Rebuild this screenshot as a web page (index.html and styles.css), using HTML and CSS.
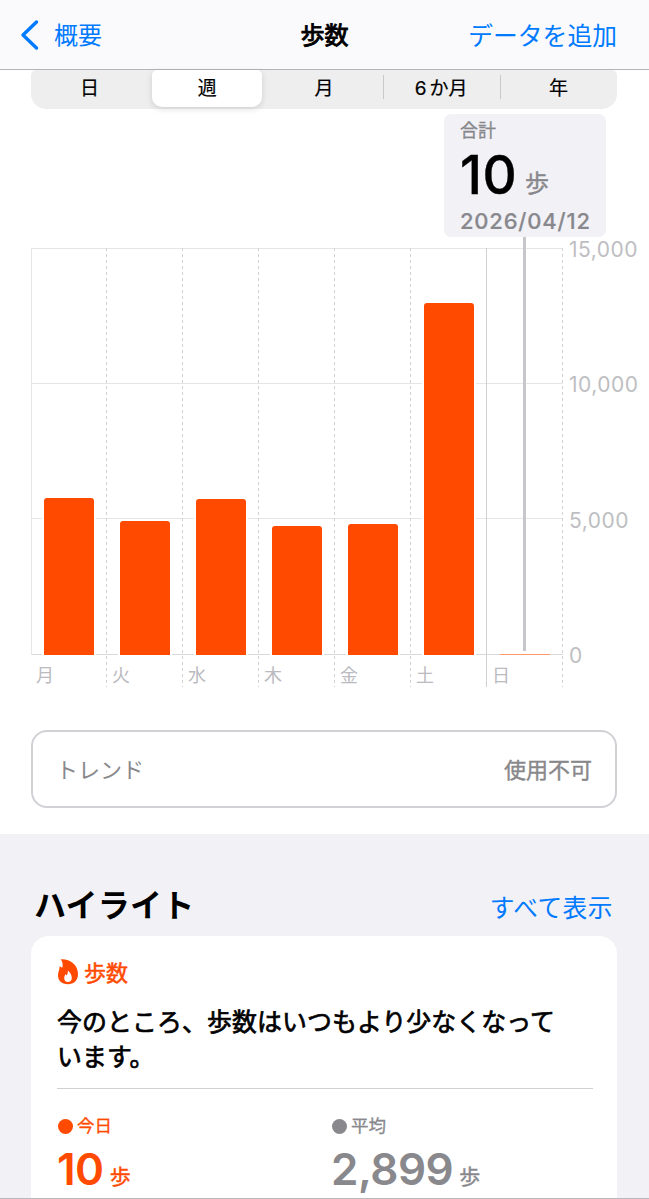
FILE: index.html
```html
<!DOCTYPE html>
<html lang="ja">
<head>
    <meta charset="UTF-8">
    <meta name="viewport" content="width=device-width, initial-scale=1.0">
    <title>歩数</title>
    <link rel="stylesheet" href="styles.css">
</head>
<body>
    <header class="navbar">
        <a class="back">
            <svg width="19" height="32" viewBox="0 0 19 32"><path d="M16.500 3 3 16l13.500 13" fill="none" stroke="#007aff" stroke-width="3.4" stroke-linecap="round" stroke-linejoin="round"/></svg>
            <span>概要</span>
        </a>
        <h1>歩数</h1>
        <a class="add">データを追加</a>
    </header>

    <main>
        <div class="segments">
            <div class="segment">日</div>
            <div class="segment active">週</div>
            <div class="segment">月</div>
            <div class="segment divided"><span>6</span>か月</div>
            <div class="segment divided">年</div>
        </div>

        <div class="callout">
            <div class="callout-label">合計</div>
            <div class="callout-value">10<span>歩</span></div>
            <div class="callout-date">2026/04/12</div>
        </div>

        <!-- グラフ -->
        <div class="chart">
            <div class="days">
                <div class="day"><div class="plot"><div class="bar" style="height: 157px"></div></div><span>月</span></div>
                <div class="day"><div class="plot"><div class="bar" style="height: 134px"></div></div><span>火</span></div>
                <div class="day"><div class="plot"><div class="bar" style="height: 156px"></div></div><span>水</span></div>
                <div class="day"><div class="plot"><div class="bar" style="height: 129px"></div></div><span>木</span></div>
                <div class="day"><div class="plot"><div class="bar" style="height: 131px"></div></div><span>金</span></div>
                <div class="day"><div class="plot"><div class="bar" style="height: 352px"></div></div><span>土</span></div>
                <div class="day"><div class="plot"><div class="bar tiny" style="height: 1px"></div></div><span>日</span><i class="cursor"></i></div>
            </div>
            <div class="axis">
                <span>15,000</span>
                <span>10,000</span>
                <span>5,000</span>
                <span>0</span>
            </div>
        </div>

        <div class="trend">
            <span>トレンド</span>
            <b>使用不可</b>
        </div>
    </main>

    <section class="highlights">
        <div class="section-head">
            <h2>ハイライト</h2>
            <a>すべて表示</a>
        </div>

        <div class="card">
            <div class="card-title">
                <svg width="22" height="26" viewBox="0 0 22 26">
                    <path fill="#ff4a00" fill-rule="evenodd" d="M3.800.4C12.500-.2 21 5.500 21 15c0 6.300-4 10.300-10.200 10.300C4.700 25.300 1 21.700 1 16.300c0-3.500 1.800-5.500 1.600-9.100l2.700 1.500C5.900 6 5.900 3 3.800.4ZM10.800 11.500c.3 2-.3 3.300-.9 4.900l-1.500-1.200c-.8 1.300-1.200 2.600-1.200 3.900 0 2.500 1.500 3.900 3.700 3.900s3.900-1.500 3.900-4c0-3.100-1.800-5.500-4-7.500Z"/>
                </svg>
                <span>歩数</span>
            </div>
            <p class="message">今のところ、歩数はいつもより少なくなって<br>います。</p>
            <div class="stats">
                <div class="stat today">
                    <div class="stat-label"><i></i>今日</div>
                    <div class="stat-value">10<span>歩</span></div>
                </div>
                <div class="stat average">
                    <div class="stat-label"><i></i>平均</div>
                    <div class="stat-value">2,899<span>歩</span></div>
                </div>
            </div>
        </div>
    </section>
</body>
</html>
```
FILE: styles.css
```css
* {
    box-sizing: border-box;
}

body {
    margin: 0;
    height: 1199px;
    overflow: hidden;
    display: flex;
    flex-direction: column;
    font-family: Inter, "Noto Sans CJK JP", sans-serif;
    background: #fff;
    color: #000;
    border-bottom: 1px solid #b9b9bc;
}

h1, h2, p {
    margin: 0;
}

/* ナビゲーションバー */
.navbar {
    flex: none;
    height: 70px;
    padding: 1px 32px 0 20px;
    display: grid;
    grid-template-columns: 1fr auto 1fr;
    align-items: center;
    background: #fafafc;
    border-bottom: 1px solid #b4b4b6;
    font-size: 24px;
    line-height: 68px;
}

.navbar h1 {
    padding: 2px 0 0 12px;
    font-size: 24px;
    font-weight: 400;
    line-height: 66px;
    -webkit-text-stroke: .9px #000;
}

.back, .add {
    color: #007aff;
}

.back {
    display: flex;
    align-items: center;
    gap: 15px;
}

.back span, .add {
    padding-top: 2px;
    line-height: 66px;
}

.add {
    text-align: right;
    font-size: 24.8px;
}

main {
    flex: none;
    height: 764px;
    padding: 0 32px 0 31px;
}

.segments {
    height: 39px;
    padding-bottom: 2px;
    display: grid;
    grid-template-columns: repeat(5, 1fr);
    background: #eeeeef;
    border-radius: 5px 5px 15px 15px;
    font-size: 19px;
    line-height: 37px;
    text-align: center;
    -webkit-text-stroke: .2px #000;
}

.segment.active {
    margin: 0 3px 0 4px;
    background: #fff;
    border-radius: 5px 5px 10px 10px;
    box-shadow: 0 2px 6px rgba(0, 0, 0, .13);
}

.segment.divided {
    background: linear-gradient(#c9c9cc, #c9c9cc) 0 5px / 1px 24px no-repeat;
}

.segment span {
    margin-right: 3px;
}

.callout {
    width: 162px;
    height: 123px;
    margin: 5px 11px 0 auto;
    padding: 5px 0 0 16px;
    background: #f1f1f6;
    border-radius: 7px;
    color: #88888c;
}

.callout-label {
    font-size: 18px;
    line-height: 23px;
    height: 22px;
    -webkit-text-stroke: .3px #88888c;
}

.callout-value {
    height: 67px;
    display: flex;
    align-items: baseline;
    font-size: 53px;
    line-height: 68px;
    font-weight: 500;
    letter-spacing: .4px;
    color: #000;
    white-space: nowrap;
    -webkit-text-stroke: .4px #000;
}

.callout-value span {
    margin: 0 0 2px 8px;
    transform: translateY(-2px);
    font-size: 24px;
    font-weight: 400;
    color: #88888c;
    -webkit-text-stroke: .4px #88888c;
}

.callout-date {
    font-size: 22px;
    line-height: 26px;
    font-weight: 500;
    letter-spacing: .8px;
    -webkit-text-stroke: .2px #88888c;
}

/* グラフ */
.chart {
    display: flex;
    margin: 11px -32px 0 0;
    height: 439px;
}

.days {
    flex: none;
    width: 532px;
    display: grid;
    grid-template-columns: repeat(7, 1fr);
    background:
        linear-gradient(#e6e6e9, #e6e6e9) 0 0 / 1px 407px no-repeat,
        linear-gradient(#e6e6e9, #e6e6e9) 0 0 / 100% 1px no-repeat,
        linear-gradient(#e6e6e9, #e6e6e9) 0 135px / 100% 1px no-repeat,
        linear-gradient(#e6e6e9, #e6e6e9) 0 270px / 100% 1px no-repeat,
        linear-gradient(#d9d9dc, #d9d9dc) 0 406px / 100% 1px no-repeat;
}

.day {
    position: relative;
    background: repeating-linear-gradient(#d2d2d5 0 3px, transparent 3px 6px) right top / 1px 100% no-repeat;
    color: #bababf;
    font-size: 18px;
}

/* 週の区切り */
.day:nth-child(6) {
    background: linear-gradient(#d0d0d3, #d0d0d3) right top / 1px 100% no-repeat;
}

.day > span {
    display: block;
    height: 32px;
    padding-left: 5px;
    line-height: 41px;
}

.plot {
    height: 406.500px;
    display: flex;
    align-items: flex-end;
    padding-left: 13px;
}

.bar {
    width: 50px;
    background: #ff4a00;
    border-radius: 3px 3px 0 0;
    box-shadow: 0 0 0 2px #fff;
}

.bar.tiny {
    border-radius: 0;
    background: #ff9a6b;
    box-shadow: none;
}

.cursor {
    position: absolute;
    top: -11px;
    left: 36px;
    width: 3px;
    height: 414px;
    background: #c7c7cb;
}

.axis {
    height: 431px;
    margin-top: -11px;
    padding-left: 6px;
    display: flex;
    flex-direction: column;
    justify-content: space-between;
    color: #bebec2;
    font-size: 21px;
    line-height: 25px;
    letter-spacing: .5px;
}

.trend {
    height: 78px;
    margin-top: 43px;
    padding: 0 23px 2px 23px;
    display: flex;
    align-items: center;
    justify-content: space-between;
    border: 2px solid #d1d1d5;
    border-radius: 16px;
    font-size: 22px;
    color: #88888b;
}

.trend b {
    font-weight: 400;
    -webkit-text-stroke: .4px #88888b;
}

/* ハイライト */
.highlights {
    flex: 1;
    min-height: 0;
    padding: 0 32px 0 31px;
    background: #f1f1f6;
}

.section-head {
    height: 102px;
    padding: 40px 4px 0 3px;
    display: flex;
    justify-content: space-between;
    line-height: 63px;
}

.section-head h2 {
    font-size: 32px;
    font-weight: 700;
    letter-spacing: .2px;
}

.section-head a {
    font-size: 24.700px;
    line-height: 69px;
    letter-spacing: .5px;
    color: #007aff;
}

.card {
    height: 290px;
    padding: 22px 24px 0 26px;
    background: #fff;
    border-radius: 18px;
}

.card-title {
    height: 30px;
    display: flex;
    align-items: center;
    gap: 5px;
    color: #ff4a00;
    font-size: 22px;
    line-height: 30px;
    -webkit-text-stroke: .5px #ff4a00;
}

.card-title svg {
    margin-top: -2px;
    -webkit-text-stroke: 0;
}

.message {
    height: 101px;
    padding-top: 17px;
    font-size: 24.900px;
    line-height: 35px;
    letter-spacing: .1px;
    white-space: nowrap;
    border-bottom: 1px solid #d0d0d2;
    -webkit-text-stroke: .7px #000;
}

.stats {
    display: grid;
    grid-template-columns: 274px 1fr;
    padding-top: 25px;
}

.today {
    color: #ff4a00;
}

.average {
    color: #88888d;
}

.stat-label {
    display: flex;
    align-items: center;
    gap: 4px;
    height: 24px;
    font-size: 17.500px;
    line-height: 24px;
    -webkit-text-stroke: .3px;
}

.stat-label i {
    width: 15px;
    height: 15px;
    margin-left: 1px;
    border-radius: 50%;
    background: currentColor;
}

.stat-value {
    display: flex;
    align-items: baseline;
    font-size: 44px;
    line-height: 62px;
    font-weight: 600;
    letter-spacing: -.5px;
    white-space: nowrap;
}

.stat-value span {
    margin-left: 6px;
    transform: translateY(-1px);
    font-size: 21px;
    font-weight: 400;
    -webkit-text-stroke: .4px;
}
```
